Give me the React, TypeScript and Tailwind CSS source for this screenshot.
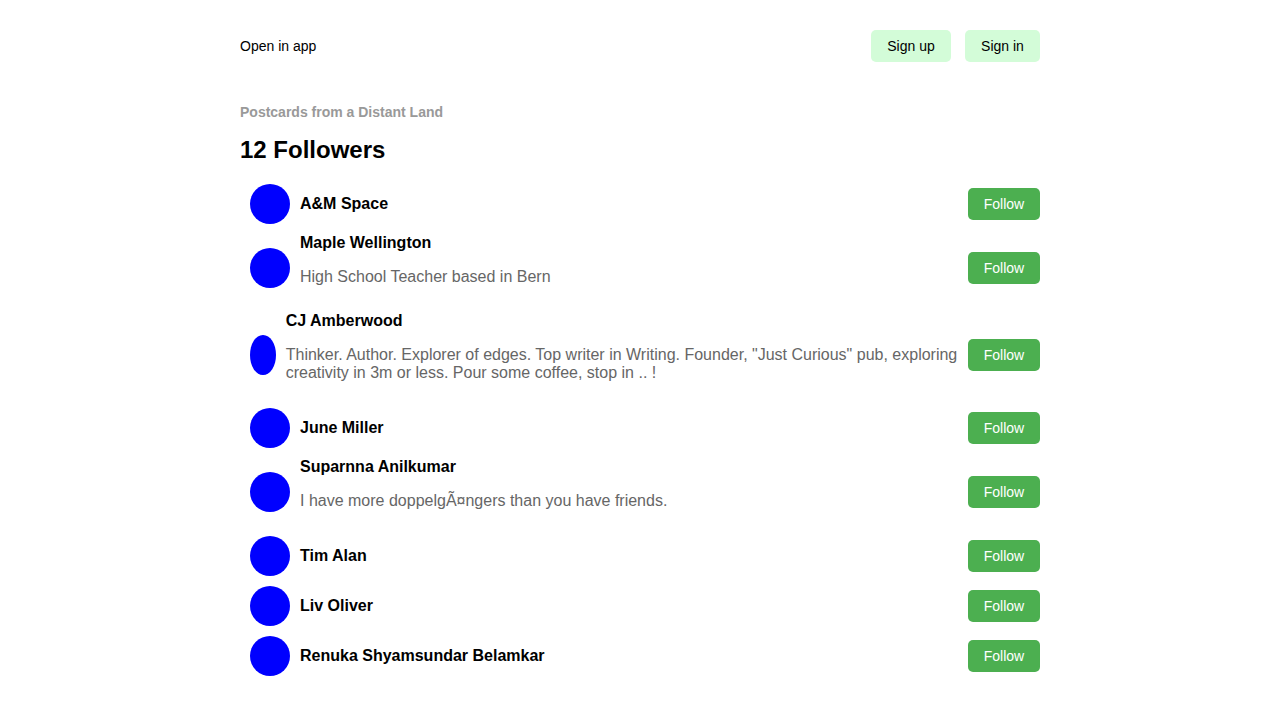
import React from 'react';

type Follower = {
    name: string;
    bio?: string;
};

const followers: Follower[] = [
    { name: 'A&M Space' },
    { name: 'Maple Wellington', bio: 'High School Teacher based in Bern' },
    {
        name: 'CJ Amberwood',
        bio: 'Thinker. Author. Explorer of edges. Top writer in Writing. Founder, "Just Curious" pub, exploring creativity in 3m or less. Pour some coffee, stop in .. !',
    },
    { name: 'June Miller' },
    { name: 'Suparnna Anilkumar', bio: 'I have more doppelgÃ¤ngers than you have friends.' },
    { name: 'Tim Alan' },
    { name: 'Liv Oliver' },
    { name: 'Renuka Shyamsundar Belamkar' },
];

function FollowerRow({ follower }: { follower: Follower }) {
    return (
        <div className="flex items-center gap-[10px] pl-[10px]">
            <div className="w-10 h-10 rounded-[50%] bg-[#0000ff]" />
            <div>
                <div className="text-[16px] font-bold text-black leading-[18px]">{follower.name}</div>
                {follower.bio && (
                    <p className="my-4 text-[16px] text-[#666666] leading-[18px]">{follower.bio}</p>
                )}
            </div>
            <button className="ml-auto shrink-0 h-8 w-[72px] rounded-[5px] bg-[#4caf50] text-white text-[14px]">
                Follow
            </button>
        </div>
    );
}

export default function App() {
    return (
        <div className="min-h-screen bg-white font-['Liberation_Sans',Arial,sans-serif]">
            <div className="w-[800px] mx-auto pt-[30px]">
                <header className="flex items-center justify-between h-8">
                    <span className="text-[14px] text-black">Open in app</span>
                    <div className="flex gap-[14px]">
                        <button className="h-8 w-20 rounded-[5px] bg-[#d3fcd8] text-[14px] text-black">Sign up</button>
                        <button className="h-8 w-[75px] rounded-[5px] bg-[#d3fcd8] text-[14px] text-black">Sign in</button>
                    </div>
                </header>

                <p className="mt-[42px] text-[14px] font-bold text-[#999999] leading-[16px]">
                    Postcards from a Distant Land
                </p>
                <h2 className="mt-4 text-[24px] font-bold text-black leading-[28px]">12 Followers</h2>

                <div className="mt-5 flex flex-col gap-[10px]">
                    {followers.map((f) => (
                        <FollowerRow key={f.name} follower={f} />
                    ))}
                </div>
            </div>
        </div>
    );
}
